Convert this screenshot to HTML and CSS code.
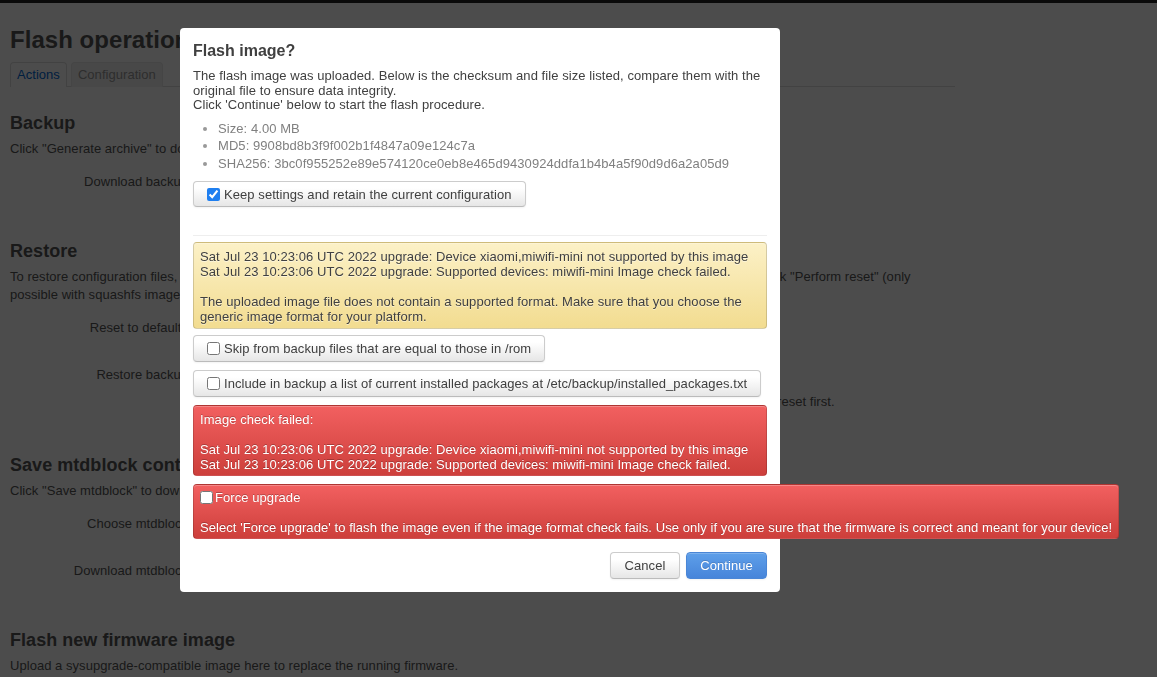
FILE: index.html
```html
<!DOCTYPE html>
<html lang="en">
<head>
<meta charset="utf-8">
<title>Flash operations</title>
<link rel="stylesheet" href="styles.css">
</head>
<body>
<div class="topbar"></div>
<div class="page">
  <h2 class="page-title">Flash operations</h2>
  <ul class="tabs">
    <li class="tab active">Actions</li>
    <li class="tab">Configuration</li>
  </ul>

  <div class="section">
    <h3>Backup</h3>
    <p class="desc">Click "Generate archive" to download a tar archive of the current configuration files.</p>
    <div class="row first"><div class="label">Download backup</div><div class="field"></div></div>
  </div>

  <div class="section">
    <h3>Restore</h3>
    <p class="desc">To restore configuration files, you can upload a previously generated backup archive here. To reset the firmware to its initial state, click "Perform reset" (only possible with squashfs images).</p>
    <div class="row first"><div class="label">Reset to defaults</div><div class="field"></div></div>
    <div class="row"><div class="label">Restore backup</div><div class="field"><div class="control"></div><div class="help">Custom files (certificates, scripts) may remain on the system. To prevent this, perform a factory-reset first.</div></div></div>
  </div>

  <div class="section">
    <h3>Save mtdblock contents</h3>
    <p class="desc">Click "Save mtdblock" to download specified mtdblock file. (NOTE: THIS FEATURE IS FOR PROFESSIONALS! )</p>
    <div class="row first"><div class="label">Choose mtdblock</div><div class="field"></div></div>
    <div class="row"><div class="label">Download mtdblock</div><div class="field"></div></div>
  </div>

  <div class="section">
    <h3>Flash new firmware image</h3>
    <p class="desc">Upload a sysupgrade-compatible image here to replace the running firmware.</p>
  </div>
</div>

<div class="overlay"></div>

<div class="modal">
  <h4 class="modal-title">Flash image?</h4>
  <p class="intro">The flash image was uploaded. Below is the checksum and file size listed, compare them with the original file to ensure data integrity.<br>Click 'Continue' below to start the flash procedure.</p>
  <ul class="sums">
    <li>Size: 4.00 MB</li>
    <li>MD5: 9908bd8b3f9f002b1f4847a09e124c7a</li>
    <li>SHA256: 3bc0f955252e89e574120ce0eb8e465d9430924ddfa1b4b4a5f90d9d6a2a05d9</li>
  </ul>
  <label class="btn check keep"><input type="checkbox" checked>Keep settings and retain the current configuration</label>
  <hr class="sep">
  <div class="alert warning">Sat Jul 23 10:23:06 UTC 2022 upgrade: Device xiaomi,miwifi-mini not supported by this image<br>Sat Jul 23 10:23:06 UTC 2022 upgrade: Supported devices: miwifi-mini Image check failed.<br><br>The uploaded image file does not contain a supported format. Make sure that you choose the generic image format for your platform.</div>
  <label class="btn check opt"><input type="checkbox">Skip from backup files that are equal to those in /rom</label>
  <label class="btn check opt"><input type="checkbox">Include in backup a list of current installed packages at /etc/backup/installed_packages.txt</label>
  <div class="alert danger">Image check failed:<br><br>Sat Jul 23 10:23:06 UTC 2022 upgrade: Device xiaomi,miwifi-mini not supported by this image<br>Sat Jul 23 10:23:06 UTC 2022 upgrade: Supported devices: miwifi-mini Image check failed.</div>
  <div class="alert danger force"><label class="force-label"><input type="checkbox">Force upgrade</label><br><br>Select 'Force upgrade' to flash the image even if the image format check fails. Use only if you are sure that the firmware is correct and meant for your device!</div>
  <div class="actions">
    <button class="btn plain">Cancel</button>
    <button class="btn primary">Continue</button>
  </div>
</div>
</body>
</html>
```

FILE: styles.css
```css
* { box-sizing: border-box; }

html, body {
  margin: 0;
  padding: 0;
}

body {
  background: #fff;
  color: #555;
  font-family: "Liberation Sans", Arial, Helvetica, sans-serif;
  font-size: 13px;
  line-height: 18px;
  letter-spacing: 0.04px;
  width: 1157px;
  height: 677px;
  overflow: hidden;
  position: relative;
}

.topbar {
  height: 3px;
  background: #222;
}

.page {
  width: 945px;
  margin-left: 10px;
}

.page-title {
  font-size: 24px;
  line-height: 29px;
  font-weight: bold;
  margin: 22px 0 8px;
  color: #555;
}

.tabs {
  list-style: none;
  margin: 0;
  padding: 0;
  display: flex;
  gap: 4px;
  border-bottom: 1px solid #ddd;
}

.tab {
  height: 25px;
  line-height: 24px;
  padding: 0 6px;
  border: 1px solid #e6e6e6;
  border-bottom: none;
  border-radius: 4px 4px 0 0;
  color: #999;
  background: #f2f2f2;
  margin-bottom: -1px;
}

.tab.active {
  color: #0069d6;
  background: #fff;
  border-color: #ddd;
}

.section { margin-top: 43px; }
.section:first-of-type { margin-top: 25px; }

.section h3 {
  font-size: 18px;
  line-height: 22px;
  font-weight: bold;
  margin: 0;
  color: #555;
}

.desc {
  margin: 6px 0 0;
}

.row {
  display: flex;
  margin-top: 17px;
}

.row.first { margin-top: 9px; }

.label {
  width: 178px;
  text-align: right;
  line-height: 30px;
  flex: none;
}

.field {
  margin-left: 12px;
  min-height: 30px;
  flex: 1;
}

.control { height: 30px; }

.help {
  margin-top: 3px;
  padding-left: 25px;
}

.overlay {
  position: fixed;
  inset: 0;
  background: rgba(0, 0, 0, 0.7);
}

.modal {
  position: absolute;
  left: 180px;
  top: 28px;
  width: 600px;
  height: 564px;
  background: #fff;
  border-radius: 4px;
  padding: 13px;
  color: #404040;
  line-height: 15px;
  letter-spacing: 0.07px;
}

.modal-title {
  font-size: 16px;
  line-height: 19px;
  font-weight: bold;
  margin: 0;
  color: #404040;
  letter-spacing: 0;
}

.intro {
  margin: 9px 0 0;
  line-height: 14.5px;
}

.sums {
  margin: 7px 0 0;
  padding-left: 25px;
  color: #808080;
}

.sums li {
  line-height: 17.5px;
}

.sums li::marker { color: #999; font-size: 14px; }

.btn {
  display: inline-flex;
  align-items: center;
  height: 27px;
  padding: 0 13px;
  border: 1px solid #ccc;
  border-bottom-color: #bbb;
  border-radius: 4px;
  background: linear-gradient(#fff, #fff 25%, #e6e6e6);
  box-shadow: inset 0 1px 0 rgba(255, 255, 255, 0.2), 0 1px 2px rgba(0, 0, 0, 0.05);
  color: #404040;
  font-family: inherit;
  font-size: 13px;
  letter-spacing: inherit;
  cursor: pointer;
}

.check {
  gap: 4px;
  white-space: nowrap;
}

.check input {
  margin: 0;
  width: 13px;
  height: 13px;
  accent-color: #1f7ff0;
  flex: none;
}

.keep {
  height: 26px;
  margin-top: 9px;
}

.opt {
  display: flex;
  width: max-content;
  margin-top: 6px;
}

.opt + .opt { margin-top: 8px; }

.sep {
  border: 0;
  border-top: 1px solid #eee;
  margin: 28px 0 6px;
}

.alert {
  border: 1px solid rgba(0, 0, 0, 0.15);
  border-radius: 4px;
  padding: 6px 6px 4px;
  line-height: 15px;
  box-shadow: inset 0 1px 0 rgba(255, 255, 255, 0.25);
}

.warning {
  background: linear-gradient(#fcf1c7, #f2dc90);
  color: #404040;
  text-shadow: 0 1px 0 rgba(255, 255, 255, 0.5);
}

.danger {
  background: linear-gradient(#f26060, #cd3f3b);
  color: #fff;
  text-shadow: 0 -1px 0 rgba(0, 0, 0, 0.25);
  margin-top: 8px;
  padding-bottom: 3px;
}

.force {
  width: max-content;
  white-space: nowrap;
  margin-top: 8px;
  padding: 5px 6px 3px;
}

.force-label input {
  margin: 0 2px 0 0;
  width: 13px;
  height: 13px;
  vertical-align: -2px;
}

.actions {
  display: flex;
  justify-content: flex-end;
  gap: 6px;
  margin-top: 13px;
}

.plain {
  width: 70px;
  justify-content: center;
}

.primary {
  width: 81px;
  justify-content: center;
  color: #fff;
  background: linear-gradient(#5e9fe9, #4785da);
  border-color: #4a86d6;
  text-shadow: 0 -1px 0 rgba(0, 0, 0, 0.15);
}
```
